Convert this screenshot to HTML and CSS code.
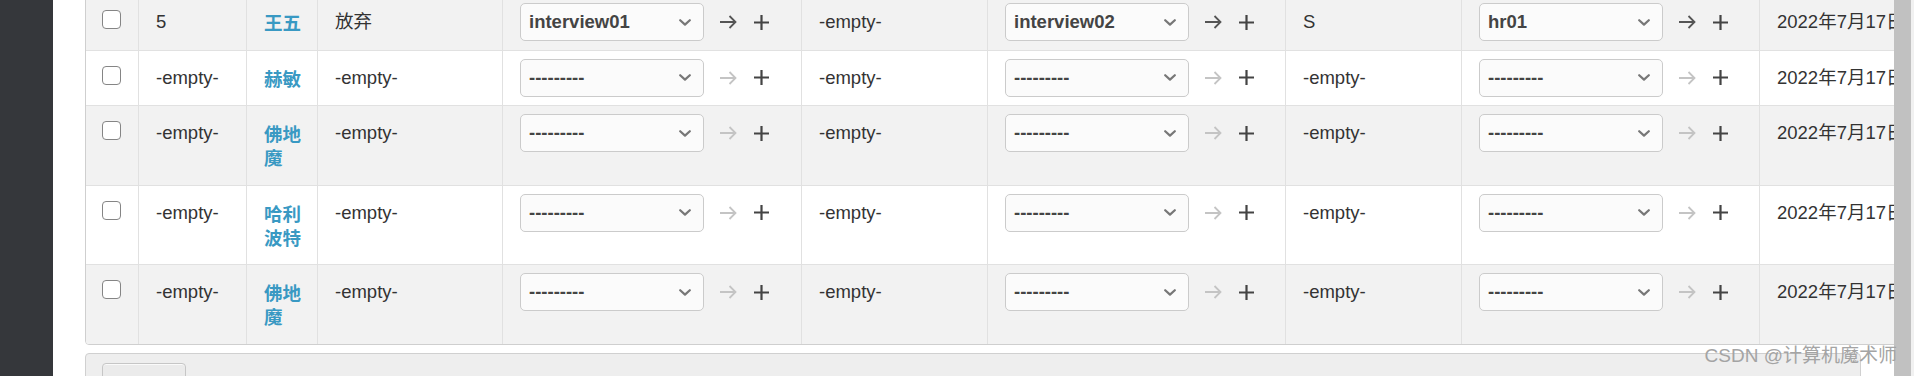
FILE: index.html
```html
<!DOCTYPE html>
<html lang="zh-CN">
<head>
<meta charset="utf-8">
<title>Change list</title>
<link rel="stylesheet" href="styles.css">
</head>
<body>
<div class="layout">
  <aside class="sidebar"></aside>
  <main class="content">
    <div class="results">
      <table class="result-list">
        <colgroup>
          <col class="c-check"><col class="c-id"><col class="c-name"><col class="c-status">
          <col class="c-w1"><col class="c-r1"><col class="c-w2"><col class="c-r2">
          <col class="c-w3"><col class="c-date">
        </colgroup>
        <tbody>
          <tr>
            <td class="check"><input type="checkbox" class="cb"></td>
            <td>5</td>
            <td class="name"><a href="#">王五</a></td>
            <td>放弃</td>
            <td class="widget"><div class="field"><div class="select"><span>interview01</span><svg class="chev" viewBox="0 0 12 7"><path d="M1.2 1.2 L6 5.6 L10.8 1.2"/></svg></div><svg class="related on" viewBox="0 0 18 14"><path d="M1 7 H16.5 M10.5 1 L16.5 7 L10.5 13"/></svg><svg class="add" viewBox="0 0 15 15"><path d="M7.5 0 V15 M0 7.5 H15"/></svg></div></td>
            <td>-empty-</td>
            <td class="widget"><div class="field"><div class="select"><span>interview02</span><svg class="chev" viewBox="0 0 12 7"><path d="M1.2 1.2 L6 5.6 L10.8 1.2"/></svg></div><svg class="related on" viewBox="0 0 18 14"><path d="M1 7 H16.5 M10.5 1 L16.5 7 L10.5 13"/></svg><svg class="add" viewBox="0 0 15 15"><path d="M7.5 0 V15 M0 7.5 H15"/></svg></div></td>
            <td>S</td>
            <td class="widget"><div class="field"><div class="select"><span>hr01</span><svg class="chev" viewBox="0 0 12 7"><path d="M1.2 1.2 L6 5.6 L10.8 1.2"/></svg></div><svg class="related on" viewBox="0 0 18 14"><path d="M1 7 H16.5 M10.5 1 L16.5 7 L10.5 13"/></svg><svg class="add" viewBox="0 0 15 15"><path d="M7.5 0 V15 M0 7.5 H15"/></svg></div></td>
            <td class="date"><span>2022年7月17日</span></td>
          </tr>
          <tr>
            <td class="check"><input type="checkbox" class="cb"></td>
            <td>-empty-</td>
            <td class="name"><a href="#">赫敏</a></td>
            <td>-empty-</td>
            <td class="widget"><div class="field"><div class="select"><span>---------</span><svg class="chev" viewBox="0 0 12 7"><path d="M1.2 1.2 L6 5.6 L10.8 1.2"/></svg></div><svg class="related" viewBox="0 0 18 14"><path d="M1 7 H16.5 M10.5 1 L16.5 7 L10.5 13"/></svg><svg class="add" viewBox="0 0 15 15"><path d="M7.5 0 V15 M0 7.5 H15"/></svg></div></td>
            <td>-empty-</td>
            <td class="widget"><div class="field"><div class="select"><span>---------</span><svg class="chev" viewBox="0 0 12 7"><path d="M1.2 1.2 L6 5.6 L10.8 1.2"/></svg></div><svg class="related" viewBox="0 0 18 14"><path d="M1 7 H16.5 M10.5 1 L16.5 7 L10.5 13"/></svg><svg class="add" viewBox="0 0 15 15"><path d="M7.5 0 V15 M0 7.5 H15"/></svg></div></td>
            <td>-empty-</td>
            <td class="widget"><div class="field"><div class="select"><span>---------</span><svg class="chev" viewBox="0 0 12 7"><path d="M1.2 1.2 L6 5.6 L10.8 1.2"/></svg></div><svg class="related" viewBox="0 0 18 14"><path d="M1 7 H16.5 M10.5 1 L16.5 7 L10.5 13"/></svg><svg class="add" viewBox="0 0 15 15"><path d="M7.5 0 V15 M0 7.5 H15"/></svg></div></td>
            <td class="date"><span>2022年7月17日</span></td>
          </tr>
          <tr>
            <td class="check"><input type="checkbox" class="cb"></td>
            <td>-empty-</td>
            <td class="name"><a href="#">佛地魔</a></td>
            <td>-empty-</td>
            <td class="widget"><div class="field"><div class="select"><span>---------</span><svg class="chev" viewBox="0 0 12 7"><path d="M1.2 1.2 L6 5.6 L10.8 1.2"/></svg></div><svg class="related" viewBox="0 0 18 14"><path d="M1 7 H16.5 M10.5 1 L16.5 7 L10.5 13"/></svg><svg class="add" viewBox="0 0 15 15"><path d="M7.5 0 V15 M0 7.5 H15"/></svg></div></td>
            <td>-empty-</td>
            <td class="widget"><div class="field"><div class="select"><span>---------</span><svg class="chev" viewBox="0 0 12 7"><path d="M1.2 1.2 L6 5.6 L10.8 1.2"/></svg></div><svg class="related" viewBox="0 0 18 14"><path d="M1 7 H16.5 M10.5 1 L16.5 7 L10.5 13"/></svg><svg class="add" viewBox="0 0 15 15"><path d="M7.5 0 V15 M0 7.5 H15"/></svg></div></td>
            <td>-empty-</td>
            <td class="widget"><div class="field"><div class="select"><span>---------</span><svg class="chev" viewBox="0 0 12 7"><path d="M1.2 1.2 L6 5.6 L10.8 1.2"/></svg></div><svg class="related" viewBox="0 0 18 14"><path d="M1 7 H16.5 M10.5 1 L16.5 7 L10.5 13"/></svg><svg class="add" viewBox="0 0 15 15"><path d="M7.5 0 V15 M0 7.5 H15"/></svg></div></td>
            <td class="date"><span>2022年7月17日</span></td>
          </tr>
          <tr>
            <td class="check"><input type="checkbox" class="cb"></td>
            <td>-empty-</td>
            <td class="name"><a href="#">哈利波特</a></td>
            <td>-empty-</td>
            <td class="widget"><div class="field"><div class="select"><span>---------</span><svg class="chev" viewBox="0 0 12 7"><path d="M1.2 1.2 L6 5.6 L10.8 1.2"/></svg></div><svg class="related" viewBox="0 0 18 14"><path d="M1 7 H16.5 M10.5 1 L16.5 7 L10.5 13"/></svg><svg class="add" viewBox="0 0 15 15"><path d="M7.5 0 V15 M0 7.5 H15"/></svg></div></td>
            <td>-empty-</td>
            <td class="widget"><div class="field"><div class="select"><span>---------</span><svg class="chev" viewBox="0 0 12 7"><path d="M1.2 1.2 L6 5.6 L10.8 1.2"/></svg></div><svg class="related" viewBox="0 0 18 14"><path d="M1 7 H16.5 M10.5 1 L16.5 7 L10.5 13"/></svg><svg class="add" viewBox="0 0 15 15"><path d="M7.5 0 V15 M0 7.5 H15"/></svg></div></td>
            <td>-empty-</td>
            <td class="widget"><div class="field"><div class="select"><span>---------</span><svg class="chev" viewBox="0 0 12 7"><path d="M1.2 1.2 L6 5.6 L10.8 1.2"/></svg></div><svg class="related" viewBox="0 0 18 14"><path d="M1 7 H16.5 M10.5 1 L16.5 7 L10.5 13"/></svg><svg class="add" viewBox="0 0 15 15"><path d="M7.5 0 V15 M0 7.5 H15"/></svg></div></td>
            <td class="date"><span>2022年7月17日</span></td>
          </tr>
          <tr>
            <td class="check"><input type="checkbox" class="cb"></td>
            <td>-empty-</td>
            <td class="name"><a href="#">佛地魔</a></td>
            <td>-empty-</td>
            <td class="widget"><div class="field"><div class="select"><span>---------</span><svg class="chev" viewBox="0 0 12 7"><path d="M1.2 1.2 L6 5.6 L10.8 1.2"/></svg></div><svg class="related" viewBox="0 0 18 14"><path d="M1 7 H16.5 M10.5 1 L16.5 7 L10.5 13"/></svg><svg class="add" viewBox="0 0 15 15"><path d="M7.5 0 V15 M0 7.5 H15"/></svg></div></td>
            <td>-empty-</td>
            <td class="widget"><div class="field"><div class="select"><span>---------</span><svg class="chev" viewBox="0 0 12 7"><path d="M1.2 1.2 L6 5.6 L10.8 1.2"/></svg></div><svg class="related" viewBox="0 0 18 14"><path d="M1 7 H16.5 M10.5 1 L16.5 7 L10.5 13"/></svg><svg class="add" viewBox="0 0 15 15"><path d="M7.5 0 V15 M0 7.5 H15"/></svg></div></td>
            <td>-empty-</td>
            <td class="widget"><div class="field"><div class="select"><span>---------</span><svg class="chev" viewBox="0 0 12 7"><path d="M1.2 1.2 L6 5.6 L10.8 1.2"/></svg></div><svg class="related" viewBox="0 0 18 14"><path d="M1 7 H16.5 M10.5 1 L16.5 7 L10.5 13"/></svg><svg class="add" viewBox="0 0 15 15"><path d="M7.5 0 V15 M0 7.5 H15"/></svg></div></td>
            <td class="date"><span>2022年7月17日</span></td>
          </tr>
        </tbody>
      </table>
    </div>
    <div class="submit-row"><button class="btn" type="button">保存</button></div>
  </main>
  <div class="scrollbar"><div class="thumb"></div></div>
</div>
<div class="watermark">CSDN @计算机魔术师</div>
</body>
</html>
```
FILE: styles.css
```css
* { box-sizing: border-box; }

html, body {
  margin: 0;
  height: 376px;
  overflow: hidden;
  background: #fff;
}

body {
  font-family: "Liberation Sans", Arial, "Noto Sans CJK SC", sans-serif;
  font-size: 18.5px;
  color: #333;
  position: relative;
}

.layout {
  display: flex;
  height: 376px;
}

.sidebar {
  flex: none;
  width: 53px;
  background: #35373b;
}

.content {
  flex: 1;
  min-width: 0;
  overflow: hidden;
  padding: 0 33px 0 32px;
}

.results {
  width: max-content;
  margin-top: -6px;
  border: 1px solid #cfcfcf;
  border-radius: 4px;
  overflow: hidden;
}

.result-list {
  border-collapse: separate;
  border-spacing: 0;
  table-layout: fixed;
  width: 1914px;
}

.c-check { width: 53px; }
.c-id { width: 108px; }
.c-name { width: 71px; }
.c-status { width: 185px; }
.c-w1 { width: 299px; }
.c-r1 { width: 186px; }
.c-w2 { width: 298px; }
.c-r2 { width: 176px; }
.c-w3 { width: 298px; }
.c-date { width: 240px; }

.result-list td {
  height: 55.6px;
  padding: 15.3px 8px 15.3px 17px;
  vertical-align: top;
  line-height: 24px;
  border-right: 1px solid #e1e1e1;
  border-bottom: 1px solid #e1e1e1;
  background: #fff;
}

.result-list tr:nth-child(odd) td { background: #f2f2f2; }
.result-list tr:last-child td { border-bottom: none; }

.result-list td.check { padding-left: 16px; }

.cb {
  -webkit-appearance: none;
  appearance: none;
  display: block;
  margin: 0;
  width: 19px;
  height: 19px;
  border: 1.6px solid #858585;
  border-radius: 4px;
  background: #fff;
}

.result-list td.name {
  font-family: "Noto Sans CJK SC", sans-serif;
  font-weight: bold;
  line-height: 24.25px;
  padding-top: 15px;
  padding-bottom: 15px;
}

.result-list td.name a {
  display: block;
  color: #3999c3;
  text-decoration: none;
}

.result-list td.widget {
  padding: 8px 17px;
}

.result-list td.date {
  white-space: nowrap;
}

.result-list td.date span {
  display: block;
  width: 140px;
}

.field {
  display: flex;
  align-items: center;
}

.select {
  flex: none;
  width: 184px;
  height: 38px;
  border: 1px solid #cbcbcb;
  border-radius: 5px;
  background: #fbfbfb;
  display: flex;
  align-items: center;
  justify-content: space-between;
  padding: 0 12px 0 8px;
  font-weight: bold;
  color: #444;
}

.chev {
  width: 12px;
  height: 7px;
  fill: none;
  stroke: #777;
  stroke-width: 2.2;
  stroke-linecap: round;
  stroke-linejoin: round;
}

.related {
  flex: none;
  margin-left: 15px;
  width: 18px;
  height: 14px;
  fill: none;
  stroke: #c4c4c4;
  stroke-width: 1.8;
}

.related.on { stroke: #555; }

.add {
  flex: none;
  margin-left: 17px;
  width: 15px;
  height: 15px;
  fill: none;
  stroke: #444;
  stroke-width: 2.2;
}

.submit-row {
  margin-top: 8px;
  border: 1px solid #d0d0d0;
  border-radius: 4px;
  background: #eeeeee;
  padding: 9px 16px 16px;
}

.btn {
  display: block;
  width: 84px;
  padding: 16px 0 10px;
  border: 1px solid #c6c6c6;
  border-radius: 4px;
  background: #ebebeb;
  box-shadow: inset 0 1px 0 #fafafa;
  font: inherit;
  color: #333;
}

.scrollbar {
  flex: none;
  width: 20px;
  background: #f1f1f1;
}

.thumb {
  width: 17px;
  height: 100%;
  background: #c1c1c1;
}

.watermark {
  position: absolute;
  right: 17px;
  top: 346px;
  font-size: 19px;
  line-height: 1;
  color: #a4a4a4;
  white-space: nowrap;
}
```
